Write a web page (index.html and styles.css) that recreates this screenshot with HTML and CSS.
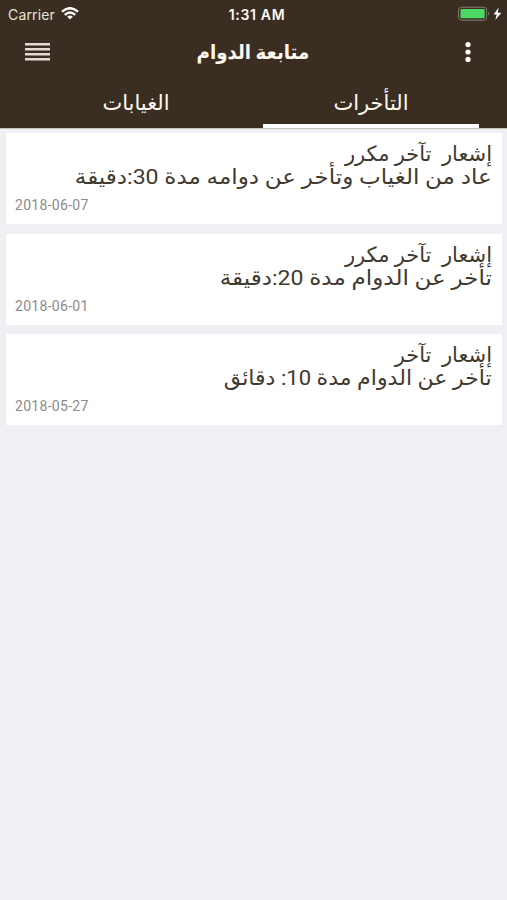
FILE: index.html
```html
<!DOCTYPE html>
<html lang="ar">
<head>
<meta charset="utf-8">
<title>متابعة الدوام</title>
<link rel="stylesheet" href="styles.css">
</head>
<body>
<header class="header">
  <div class="status">
    <div class="carrier"><span>Carrier</span>
      <svg class="wifi" width="18" height="13" viewBox="0 0 18 13" fill="none" stroke="#fff" stroke-width="2.4"><path d="M1 4.7Q9-2.3 17 4.7M3.8 7.8Q9 3.2 14.2 7.8"/><path d="M6.2 9.7Q9 7.4 11.8 9.7L9 12.6Z" fill="#fff" stroke="none"/></svg>
    </div>
    <div class="time">1:31 AM</div>
    <svg class="battery" width="44" height="16" viewBox="0 0 44 16"><rect x=".6" y="1.2" width="28" height="13" rx="3" fill="none" stroke="#858078"/><rect x="2.5" y="3.1" width="24.2" height="9.2" rx="1" fill="#4bd964"/><path d="M30 5.4q2 2.2 0 4.4z" fill="#858078"/><path d="M40.7 1.5 35.6 8.5h3.1l-1.4 5.6L43.4 6.7h-3.8z" fill="#fff"/></svg>
  </div>
  <div class="navbar">
    <svg width="25" height="18" viewBox="0 0 25 18" fill="#e5d9d3"><path d="M0 0h25v2.4H0zM0 5h25v2.4H0zM0 10h25v2.4H0zM0 15h25v2.4H0z"/></svg>
    <h1 class="title" dir="rtl"><span class="fit">متابعة الدوام</span></h1>
    <svg width="6" height="20" viewBox="0 0 6 20" fill="#fff"><circle cx="3" cy="2.6" r="2.6"/><circle cx="3" cy="10" r="2.6"/><circle cx="3" cy="17.4" r="2.6"/></svg>
  </div>
  <nav class="tabs" dir="rtl">
    <div class="tab active"><span class="fit">التأخرات</span></div>
    <div class="tab"><span class="fit">الغيابات</span></div>
  </nav>
</header>
<main class="list">
  <article class="card">
    <p class="line" dir="rtl"><span class="fit">إشعار  تآخر مكرر</span></p>
    <p class="line" dir="rtl"><span class="fit wide">عاد من الغياب وتأخر عن دوامه مدة 30:دقيقة</span></p>
    <time class="date">2018-06-07</time>
  </article>
  <article class="card">
    <p class="line" dir="rtl"><span class="fit">إشعار  تآخر مكرر</span></p>
    <p class="line" dir="rtl"><span class="fit wide">تأخر عن الدوام مدة 20:دقيقة</span></p>
    <time class="date">2018-06-01</time>
  </article>
  <article class="card">
    <p class="line" dir="rtl"><span class="fit">إشعار  تآخر</span></p>
    <p class="line" dir="rtl"><span class="fit medium">تأخر عن الدوام مدة 10: دقائق</span></p>
    <time class="date">2018-05-27</time>
  </article>
</main>
</body>
</html>
```
FILE: styles.css
```css
* { box-sizing: border-box; }
body { margin: 0; background: #efeff4; font-family: Roboto, "DejaVu Sans", sans-serif; }
.header { height: 129px; background: #3a2d21; color: #fffaf0; border-bottom: 1px solid #b9c9b5; }
.status { height: 27px; display: grid; grid-template-columns: 1fr auto 1fr; align-items: center; padding: 0 5px 0 8px; font: 14px/27px Inter, sans-serif; }
.carrier { display: flex; align-items: center; gap: 6px; color: #e9e2d9; letter-spacing: .15px; }
.wifi { margin-top: -1px; }
.time { font-weight: 600; font-size: 14px; letter-spacing: .7px; padding: 1px 0 0 4px; }
.battery { justify-self: end; }
.navbar { height: 50px; display: flex; align-items: center; justify-content: space-between; padding: 0 36px 0 25px; }
.title { margin: 0; font-size: 20px; line-height: 48px; font-weight: 700; }
.fit { display: inline-block; white-space: pre; transform-origin: right center; }
.title .fit { transform: translateX(-4px) scaleX(.91); transform-origin: center; margin-left: -1px; }
.tabs { height: 51px; display: flex; padding: 0 28px; }
.tab { width: 216px; height: 51px; text-align: center; font-size: 21px; line-height: 52px; }
.tab + .tab { margin-right: 19px; flex-shrink: 0; }
.active { border-bottom: 4px solid #fff; }
.list { padding: 4px 5px 0 6px; display: flex; flex-direction: column; gap: 9.5px; }
.card { height: 91px; background: #fff; padding: 10px 10px 0 9px; color: #40392f; }
.line { margin: 0; height: 23px; line-height: 23px; font-size: 21px; }
.wide { transform: scaleX(1.098); }
.medium { transform: scaleX(1.052); }
.date { display: block; margin-top: 6px; font-size: 14px; line-height: 20px; letter-spacing: .3px; color: #8b8b8b; }
```
